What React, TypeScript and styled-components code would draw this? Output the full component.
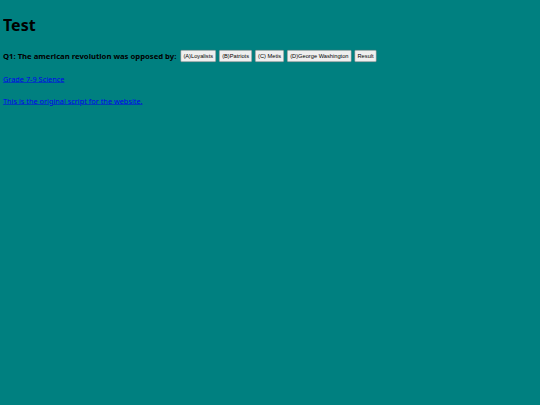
import { FC } from 'react'
import styled, { createGlobalStyle } from 'styled-components'

const GlobalStyle = createGlobalStyle`
  html, body {
    margin: 0;
    background: #008080;
    overflow: hidden;
  }
  body {
    font-family: 'Noto Sans', 'DejaVu Sans', sans-serif;
  }
`

// the page is laid out at twice the size and shown at half, like the reference capture
const Page = styled.div`
  width: 1080px;
  padding: 8px 6px;
  box-sizing: border-box;
  transform: scale(0.5);
  transform-origin: 0 0;
`

const Title = styled.h1`
  margin: 22px 0 0;
  font-size: 32px;
  line-height: 40px;
  font-weight: 700;
  color: #000;
`

const QuestionRow = styled.div`
  display: flex;
  align-items: center;
  gap: 6px;
  margin-top: 30px;
`

const Question = styled.span`
  font-size: 15.4px;
  font-weight: 700;
  color: #000;
  margin-right: 2px;
`

const Choice = styled.button`
  height: 24px;
  padding: 0 5px;
  font-family: 'Liberation Sans', Arial, sans-serif;
  font-size: 11.4px;
  color: #000;
  background: #efefef;
  border: 1px solid #767676;
  border-radius: 2px;
  cursor: pointer;
`

const Links = styled.div`
  display: flex;
  flex-direction: column;
  align-items: flex-start;
  gap: 24px;
  margin-top: 24px;
`

const Link = styled.a`
  font-size: 14.7px;
  line-height: 20px;
  color: #0000ee;
  text-decoration: underline;
`

const choices = ['(A)Loyalists', '(B)Patriots', '(C) Metis', '(D)George Washington', 'Result']

const App: FC = () => {
  return (
    <Page>
      <GlobalStyle />
      <Title>Test</Title>
      <QuestionRow>
        <Question>Q1: The american revolution was opposed by:</Question>
        {choices.map((c) => (
          <Choice key={c}>{c}</Choice>
        ))}
      </QuestionRow>
      <Links>
        <Link href='#'>Grade 7-9 Science</Link>
        <Link href='#'>This is the original script for the website.</Link>
      </Links>
    </Page>
  )
}

export default App
